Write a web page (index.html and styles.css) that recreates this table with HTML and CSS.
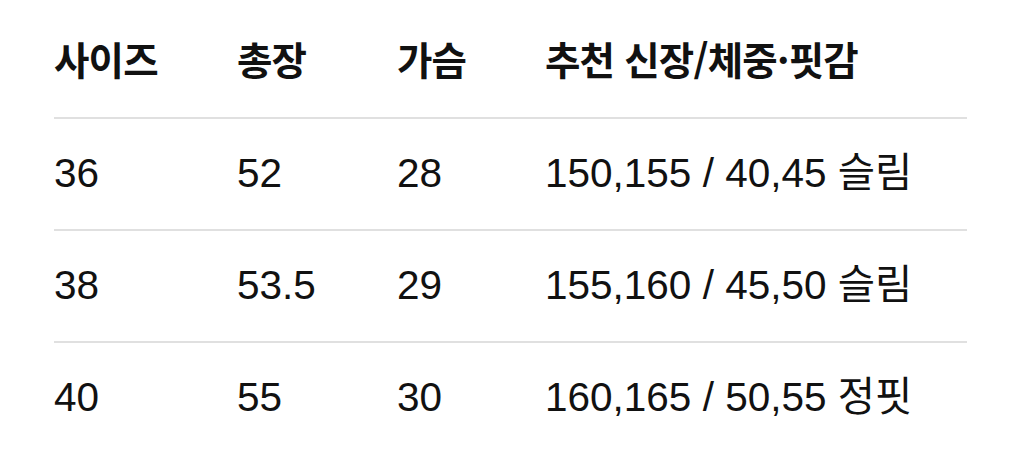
FILE: index.html
```html
<!DOCTYPE html>
<html lang="ko">
<head>
<meta charset="utf-8">
<link rel="stylesheet" href="styles.css">
</head>
<body>
<div class="table">
  <div class="row head">
    <div class="cell">사이즈</div>
    <div class="cell">총장</div>
    <div class="cell">가슴</div>
    <div class="cell">추천 신장/체중·핏감</div>
  </div>
  <div class="row">
    <div class="cell">36</div>
    <div class="cell">52</div>
    <div class="cell">28</div>
    <div class="cell">150,155 / 40,45 슬림</div>
  </div>
  <div class="row">
    <div class="cell">38</div>
    <div class="cell">53.5</div>
    <div class="cell">29</div>
    <div class="cell">155,160 / 45,50 슬림</div>
  </div>
  <div class="row last">
    <div class="cell">40</div>
    <div class="cell">55</div>
    <div class="cell">30</div>
    <div class="cell">160,165 / 50,55 정핏</div>
  </div>
</div>
</body>
</html>
```
FILE: styles.css
```css
html, body {
  margin: 0;
  padding: 0;
  background: #ffffff;
}
body {
  overflow: hidden;
  color: #111111;
  font-family: "Liberation Sans", "Noto Sans CJK KR", sans-serif;
}
.table {
  margin: 7px 57px 0 54px;
}
.row {
  display: grid;
  grid-template-columns: 183px 160px 148px 1fr;
  align-items: baseline;
  box-sizing: border-box;
  height: 112px;
  padding-top: 21px;
  border-bottom: 2px solid #e0e0e0;
  font-size: 40.5px;
}
.row.last {
  border-bottom: none;
}
.head {
  align-items: center;
  padding-top: 0;
  padding-bottom: 8px;
  font-family: "Noto Sans CJK KR", sans-serif;
  font-weight: 700;
  font-size: 38.5px;
  letter-spacing: -0.8px;
}
.cell {
  white-space: nowrap;
}
```
